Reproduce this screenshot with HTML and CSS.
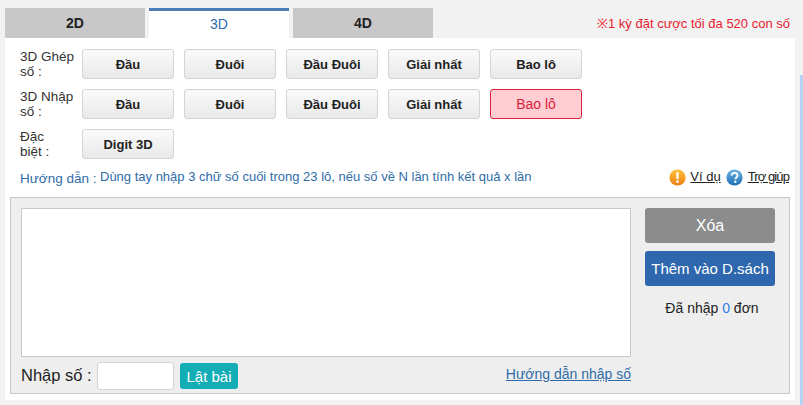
FILE: index.html
```html
<!DOCTYPE html>
<html lang="vi">
<head>
<meta charset="utf-8">
<title>3D</title>
<link rel="stylesheet" href="styles.css">
</head>
<body>
<div class="page">
  <main class="main">
    <div class="tabbar">
      <div class="tab">2D</div>
      <div class="tab active">3D</div>
      <div class="tab">4D</div>
      <div class="notice">※1 kỳ đặt cược tối đa 520 con số</div>
    </div>
    <section class="panel">
      <div class="row">
        <div class="label">3D Ghép<br>số :</div>
        <button class="opt">Đầu</button>
        <button class="opt">Đuôi</button>
        <button class="opt">Đầu Đuôi</button>
        <button class="opt">Giải nhất</button>
        <button class="opt">Bao lô</button>
      </div>
      <div class="row">
        <div class="label">3D Nhập<br>số :</div>
        <button class="opt">Đầu</button>
        <button class="opt">Đuôi</button>
        <button class="opt">Đầu Đuôi</button>
        <button class="opt">Giải nhất</button>
        <button class="opt selected">Bao lô</button>
      </div>
      <div class="row">
        <div class="label">Đặc<br>biệt :</div>
        <button class="opt">Digit 3D</button>
      </div>
      <div class="guide">
        <span class="guide-label">Hướng dẫn :</span>
        <span class="guide-text">Dùng tay nhập 3 chữ số cuối trong 23 lô, nếu số về N lần tính kết quả x lần</span>
        <span class="help">
          <svg class="ico" viewBox="0 0 18 18" aria-hidden="true">
            <defs><linearGradient id="og" x1="0" y1="0" x2="0" y2="1"><stop offset="0" stop-color="#fdc23c"/><stop offset="1" stop-color="#ee7f14"/></linearGradient></defs>
            <circle cx="9" cy="9" r="8.600" fill="url(#og)"/>
            <rect x="7.800" y="3.200" width="2.400" height="7.600" rx="1.100" fill="#fff"/>
            <circle cx="9" cy="13.400" r="1.400" fill="#fff"/>
          </svg>
          <a class="example" href="#">Ví dụ</a>
          <svg class="ico" viewBox="0 0 18 18" aria-hidden="true">
            <defs><linearGradient id="bg" x1="0" y1="0" x2="0" y2="1"><stop offset="0" stop-color="#6db3e4"/><stop offset="1" stop-color="#1c6fb5"/></linearGradient></defs>
            <circle cx="9" cy="9" r="8.600" fill="url(#bg)"/>
            <path d="M6 7c0-1.900 1.400-2.900 3.100-2.900S12.200 5.100 12.200 6.800c0 2.100-2.300 2.200-2.300 4" fill="none" stroke="#fff" stroke-width="2"/>
            <circle cx="9.900" cy="13.500" r="1.300" fill="#fff"/>
          </svg>
          <a class="support" href="#">Trợ giúp</a>
        </span>
      </div>
      <div class="entry">
        <div class="entry-left">
          <textarea class="numbers"></textarea>
          <div class="entry-foot">
            <label class="num-label">Nhập số :</label>
            <input class="num-input" type="text">
            <button class="flip">Lật bài</button>
            <a class="guide-link" href="#">Hướng dẫn nhập số</a>
          </div>
        </div>
        <div class="entry-right">
          <button class="action clear">Xóa</button>
          <button class="action add">Thêm vào D.sách</button>
          <div class="count">Đã nhập <span class="zero">0</span> đơn</div>
        </div>
      </div>
    </section>
  </main>
  <div class="strip"></div>
</div>
</body>
</html>
```
FILE: styles.css
```css
* { box-sizing: border-box; }
html, body { margin: 0; padding: 0; height: 100%; overflow: hidden; }
body { background: #f2f2f2; font-family: "Liberation Sans", Arial, sans-serif; font-size: 14px; color: #222; }
.page { display: flex; height: 405px; }
.main { width: 800px; padding: 8px 5px 0; }
.strip { width: 3px; margin-top: 75px; background: #b5d3f2; }
.tabbar { display: flex; gap: 4px; height: 30px; }
.tab { width: 140px; height: 30px; background: #c8c8c8; font-weight: bold; font-size: 14px; line-height: 30px; text-align: center; color: #222; }
.tab.active { background: #fff; border-top: 3px solid #4a7fb5; color: #2f6ca8; font-weight: normal; line-height: 27px; font-size: 14px; }
.notice { margin-left: auto; padding: 8px 5px 0 0; color: #e8202f; font-size: 13px; line-height: 16px; }
.panel { background: #fff; height: 362px; padding: 11px 5px 0; }
.row { display: flex; align-items: center; height: 30px; margin-bottom: 10px; padding-left: 10px; gap: 10px; }
.label { width: 52px; font-size: 13.500px; line-height: 15px; color: #333; white-space: nowrap; }
.opt { width: 92px; height: 30px; padding: 0; border: 1px solid #d4d4d4; border-radius: 3px; background: linear-gradient(#fafafa, #e9e9e9); font: bold 13px "Liberation Sans", Arial, sans-serif; color: #222; }
.opt.selected { border-color: #d9233e; background: #ffcdd2; color: #d9233e; font-weight: normal; font-size: 14px; }
.guide { display: flex; align-items: center; height: 18px; margin-top: -1px; padding-left: 10px; color: #2f6ca8; font-size: 13px; }
.guide-label { width: 80px; font-size: 13.500px; position: relative; top: 1px; }
.guide-text { flex: 1; position: relative; top: -1px; }
.help { display: flex; align-items: center; color: #222; padding-right: 1px; font-size: 13px; }
.help a { color: #222; text-decoration: underline; position: relative; top: -1px; }
.example { margin: 0 5px 0 4px; }
.support { margin-left: 5px; letter-spacing: -0.900px; }
.ico { width: 17px; height: 17px; }
.entry { display: flex; width: 780px; height: 197px; margin-top: 11px; border: 1px solid #c8c8c8; background: #eee; padding: 10px 14px 0 10px; }
.entry-left { width: 610px; }
.numbers { display: block; width: 610px; height: 149px; border: 1px solid #c8c8c8; background: #fff; resize: none; outline: none; }
.entry-foot { display: flex; align-items: center; height: 28px; margin-top: 5px; }
.num-label { width: 76px; font-size: 16.500px; color: #222; position: relative; top: -1px; }
.num-input { width: 77px; height: 28px; border: 1px solid #d4d4d4; border-radius: 3px; background: #fff; outline: none; }
.flip { width: 58px; height: 26px; margin-left: 6px; padding: 0; border: 0; border-radius: 3px; background: #12adb5; color: #fff; font: 15px "Liberation Sans", Arial, sans-serif; }
.guide-link { margin-left: auto; color: #2f6ca8; font-size: 14px; text-decoration: underline; position: relative; top: -2px; }
.entry-right { width: 130px; margin-left: 14px; }
.action { display: block; width: 130px; height: 35px; margin-bottom: 8px; padding: 0; border: 0; border-radius: 3px; color: #fff; font: 14px "Liberation Sans", Arial, sans-serif; }
.clear { background: #8c8c8c; font-size: 16px; }
.add { background: #2e67ad; font-size: 15px; }
.count { margin-top: 14px; padding-left: 4px; text-align: center; font-size: 14px; color: #222; }
.zero { color: #2f7de0; }
```
